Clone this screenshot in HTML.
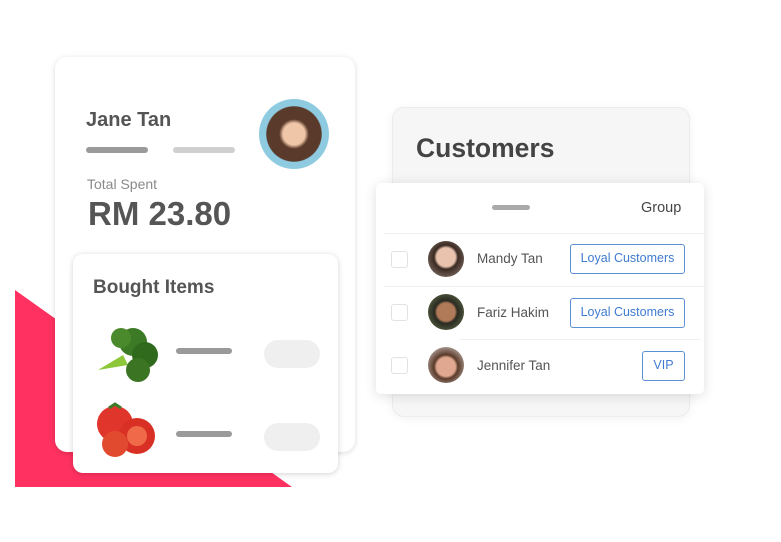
<!DOCTYPE html>
<html><head><style>
body{margin:0;width:781px;height:542px;background:#fff;position:relative;overflow:hidden;font-family:"Liberation Sans",sans-serif;}
.a{position:absolute}
.bar{position:absolute;height:6px;border-radius:3px}
.cb{position:absolute;left:391px;width:17px;height:17px;border:1.5px solid #e2e2e2;border-radius:3px;box-sizing:border-box}
.nm{position:absolute;left:477px;font-size:13.5px;color:#555}
.tag{position:absolute;border:1.5px solid #5b8fd6;border-radius:3px;color:#3f7bd0;font-size:12.5px;text-align:center;box-sizing:border-box;line-height:27px;height:30px}
.av{position:absolute;width:36px;height:36px;border-radius:50%;left:428px}
</style></head><body>
<svg class="a" style="left:0;top:0" width="781" height="542"><polygon points="15,290 292,487 15,487" fill="#fe3160"/></svg>
<div class="a" style="left:55px;top:57px;width:300px;height:395px;background:#fff;border-radius:12px;box-shadow:0 1px 6px rgba(0,0,0,.15)"></div>
<div class="a" style="left:86px;top:109px;font-size:20px;font-weight:bold;color:#555;">Jane Tan</div>
<div class="bar" style="left:86px;top:147px;width:62px;background:#9a9a9a"></div>
<div class="bar" style="left:173px;top:147px;width:62px;background:#cfcfcf"></div>
<div class="a" style="left:259px;top:99px;width:70px;height:70px;border-radius:50%;background:radial-gradient(circle at 50% 50%,#f0c6a8 0 22%,#5a3a2a 30% 55%,#8fcbe0 57%)"></div>
<div class="a" style="left:87px;top:176px;font-size:14px;color:#8a8a8a">Total Spent</div>
<div class="a" style="left:88px;top:195px;font-size:33px;font-weight:bold;color:#555">RM 23.80</div>
<div class="a" style="left:73px;top:254px;width:265px;height:219px;background:#fff;border-radius:10px;box-shadow:0 1px 6px rgba(0,0,0,.18)"></div>
<div class="a" style="left:93px;top:277px;font-size:19px;font-weight:bold;color:#555">Bought Items</div>
<svg class="a" style="left:93px;top:320px" width="70" height="70"><path d="M5,50 L30,35 L35,45 Z" fill="#8cc83a"/><circle cx="40" cy="22" r="14" fill="#3d7a25"/><circle cx="52" cy="35" r="13" fill="#2f6a1d"/><circle cx="45" cy="50" r="12" fill="#3b7524"/><circle cx="28" cy="18" r="10" fill="#4a8a2c"/></svg>
<svg class="a" style="left:95px;top:400px" width="65" height="60"><circle cx="20" cy="24" r="18" fill="#e0352a"/><circle cx="42" cy="36" r="18" fill="#d83024"/><circle cx="20" cy="44" r="13" fill="#e24a30"/><circle cx="42" cy="36" r="10" fill="#f06a4a"/><path d="M14,8 L20,4 L26,8" stroke="#3c7a2a" stroke-width="3" fill="none"/></svg>
<div class="bar" style="left:176px;top:348px;width:56px;background:#9a9a9a"></div>
<div class="bar" style="left:176px;top:431px;width:56px;background:#9a9a9a"></div>
<div class="a" style="left:264px;top:340px;width:56px;height:28px;border-radius:14px;background:#efefef"></div>
<div class="a" style="left:264px;top:423px;width:56px;height:28px;border-radius:14px;background:#efefef"></div>

<div class="a" style="left:392px;top:107px;width:296px;height:308px;background:#f6f6f6;border-radius:12px;border:1px solid #ececec;box-shadow:0 2px 10px rgba(0,0,0,.05)"></div>
<div class="a" style="left:416px;top:133px;font-size:26.5px;font-weight:bold;color:#444">Customers</div>
<div class="a" style="left:376px;top:183px;width:328px;height:211px;background:#fff;border-radius:5px;box-shadow:0 2px 12px rgba(0,0,0,.13)"></div>
<div class="bar" style="left:492px;top:205px;width:38px;height:5px;background:#aaa"></div>
<div class="a" style="left:641px;top:200px;font-size:14.5px;color:#444">Group</div>
<div class="a" style="left:384px;top:233px;width:320px;height:1px;background:#f0f0f0"></div>
<div class="a" style="left:384px;top:286px;width:320px;height:1px;background:#f0f0f0"></div>
<div class="a" style="left:460px;top:339px;width:240px;height:1px;background:#f0f0f0"></div>
<div class="cb" style="top:251px"></div><div class="cb" style="top:304px"></div><div class="cb" style="top:357px"></div>
<div class="av" style="top:241px;background:radial-gradient(circle at 50% 45%,#e9c3ae 0 35%,#3a2a22 45%,#9a8a80)"></div>
<div class="av" style="top:294px;background:radial-gradient(circle at 50% 50%,#b07a58 0 35%,#2a2a22 45%,#6a7a50)"></div>
<div class="av" style="top:347px;background:radial-gradient(circle at 50% 55%,#e0a890 0 35%,#5a3a2a 45%,#e6e0dc)"></div>
<div class="nm" style="top:251px">Mandy Tan</div>
<div class="nm" style="top:305px">Fariz Hakim</div>
<div class="nm" style="top:358px">Jennifer Tan</div>
<div class="tag" style="left:570px;top:244px;width:115px">Loyal Customers</div>
<div class="tag" style="left:570px;top:298px;width:115px">Loyal Customers</div>
<div class="tag" style="left:642px;top:351px;width:43px">VIP</div>
</body></html>
